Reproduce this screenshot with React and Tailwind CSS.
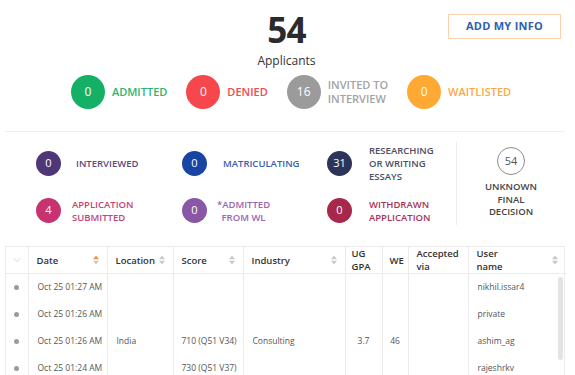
import { ChevronDown } from 'lucide-react'

// top status pills
const mainStats = [
  { n: 0, label: ['ADMITTED'], circle: 'bg-[#13b066]', text: 'text-[#2db46e]' },
  { n: 0, label: ['DENIED'], circle: 'bg-[#f5474c]', text: 'text-[#f04a50]' },
  { n: 16, label: ['INVITED TO', 'INTERVIEW'], circle: 'bg-[#9b9b9b]', text: 'text-[#a3a3a3]' },
  { n: 0, label: ['WAITLISTED'], circle: 'bg-[#ffa935]', text: 'text-[#fca846]' },
]

// secondary stats, row by row
const subStats = [
  { n: 0, label: ['INTERVIEWED'], circle: 'bg-[#4f3677]', text: 'text-[#5b4a80]', pad: 'ml-[15px]' },
  { n: 0, label: ['MATRICULATING'], circle: 'bg-[#1845a3]', text: 'text-[#3b5eb3]', pad: 'ml-[16px]' },
  { n: 31, label: ['RESEARCHING', 'OR WRITING', 'ESSAYS'], circle: 'bg-[#2c3558]', text: 'text-[#4b4f62]', pad: 'ml-[17px]' },
  { n: 4, label: ['APPLICATION', 'SUBMITTED'], circle: 'bg-[#c8336f]', text: 'text-[#c4437b]', pad: 'ml-[11px]' },
  { n: 0, label: ['*ADMITTED', 'FROM WL'], circle: 'bg-[#8a57a6]', text: 'text-[#9a66b3] text-center', pad: 'ml-[10px]' },
  { n: 0, label: ['WITHDRAWN', 'APPLICATION'], circle: 'bg-[#a8284b]', text: 'text-[#a73458]', pad: 'ml-[17px]' },
]

const columns = [
  { key: 'dot', label: [], w: 'w-[22px]' },
  { key: 'date', label: ['Date'], w: 'w-[79px]', sort: 'active' },
  { key: 'loc', label: ['Location'], w: 'w-[66px]', sort: 'idle' },
  { key: 'score', label: ['Score'], w: 'w-[70px]', sort: 'idle' },
  { key: 'ind', label: ['Industry'], w: 'w-[102px]', sort: 'idle' },
  { key: 'gpa', label: ['UG', 'GPA'], w: 'w-[37px]', pad: 'pl-[6px]' },
  { key: 'we', label: ['WE'], w: 'w-[26px]', pad: 'pl-[7px]' },
  { key: 'via', label: ['Accepted', 'via'], w: 'w-[60px]' },
  { key: 'user', label: ['User', 'name'], w: 'w-[98px]', sort: 'idle' },
]

const rows = [
  { date: 'Oct 25 01:27 AM', user: 'nikhil.issar4' },
  { date: 'Oct 25 01:26 AM', user: 'private' },
  { date: 'Oct 25 01:26 AM', loc: 'India', score: '710 (Q51 V34)', ind: 'Consulting', gpa: '3.7', we: '46', user: 'ashim_ag' },
  { date: 'Oct 25 01:24 AM', score: '730 (Q51 V37)', user: 'rajeshrkv' },
]

function SortIcon({ active }) {
  return (
    <svg width="6" height="10" viewBox="0 0 6 10" className="shrink-0">
      <path d="M0 4.2 L3 0.5 L6 4.2 Z" fill={active ? '#f5913c' : '#c9c9c9'} />
      <path d="M0 5.8 L3 9.5 L6 5.8 Z" fill="#c9c9c9" />
    </svg>
  )
}

export default function App() {
  return (
    <div className="h-[375px] w-[575px] overflow-hidden bg-white text-[#333]" style={{ fontFamily: '"Open Sans", "Liberation Sans", sans-serif' }}>
      <div className="ml-[5px] w-[560px]">

        {/* Header: total + add button */}
        <div className="grid grid-cols-[1fr_auto_1fr] pt-[10px]">
          <div />
          <div className="flex flex-col items-center pl-[3px]">
            <div className="text-[35px] font-bold leading-[40px] tracking-tight text-[#2b2b2b]">54</div>
            <div className="mt-[3px] text-[12px] leading-[16px] text-[#333]">Applicants</div>
          </div>
          <div className="flex justify-end">
            <button className="mt-[4px] mr-[4px] h-[25px] w-[113px] border border-[#fbd2ac] text-[11px] font-bold tracking-wide text-[#2f5ead]">
              ADD MY INFO
            </button>
          </div>
        </div>

        {/* Main statuses */}
        <div className="mt-[6px] flex items-center justify-center gap-[19px] pl-[12px]">
          {mainStats.map((s, i) => (
            <div key={i} className="flex items-center gap-[7px]">
              <div className={`flex h-[34px] w-[34px] items-center justify-center rounded-full text-[12px] text-white ${s.circle}`}>{s.n}</div>
              <div className={`text-[11px] font-semibold leading-[14px] ${s.text}`}>
                {s.label.map((l) => <div key={l}>{l}</div>)}
              </div>
            </div>
          ))}
        </div>

        <div className="mt-[22px] border-t border-[#eef0ea]" />

        {/* Secondary statuses */}
        <div className="mt-[10px] flex h-[83px]">
          <div className="grid w-[451px] grid-cols-[146px_145px_1fr] grid-rows-[40px_26px] content-center gap-y-[14px] pl-[31px]">
            {subStats.map((s, i) => (
              <div key={i} className="flex items-center">
                <div className={`flex h-[25px] w-[25px] shrink-0 items-center justify-center rounded-full text-[11px] text-white ${s.circle}`}>{s.n}</div>
                <div className={`text-[9.5px] font-semibold leading-[13px] ${s.pad} ${s.text}`}>
                  {s.label.map((l) => <div key={l}>{l}</div>)}
                </div>
              </div>
            ))}
          </div>
          <div className="w-px self-stretch bg-[#ececec]" />
          <div className="flex flex-1 flex-col items-center pt-[5px]">
            <div className="flex h-[28px] w-[28px] items-center justify-center rounded-full border border-[#8c8c8c] text-[11px] text-[#555]">54</div>
            <div className="mt-[6px] text-center text-[9.5px] font-semibold leading-[12.5px] text-[#454545]">
              <div>UNKNOWN</div>
              <div>FINAL</div>
              <div>DECISION</div>
            </div>
          </div>
        </div>

        {/* Applicants table */}
        <div className="relative mt-[21px] border border-[#ebebeb]">
          <table className="w-full table-fixed border-collapse">
            <thead>
              <tr className="h-[26px] border-b border-[#ebebeb]">
                {columns.map((c, i) => (
                  <th key={c.key} className={`${c.w} ${i > 0 ? 'border-l border-[#ebebeb]' : ''} p-0 text-left align-middle font-semibold`}>
                    {c.key === 'dot' ? (
                      <div className="flex justify-center">
                        <ChevronDown size={12} strokeWidth={1.2} color="#b8b8b8" />
                      </div>
                    ) : (
                      <div className={`flex items-center justify-between ${c.pad || 'pl-[8px]'} pr-[8px]`}>
                        <div className="text-[9.5px] leading-[13px] text-[#333]">
                          {c.label.map((l) => <div key={l}>{l}</div>)}
                        </div>
                        {c.sort && <SortIcon active={c.sort === 'active'} />}
                      </div>
                    )}
                  </th>
                ))}
              </tr>
            </thead>
            <tbody>
              {rows.map((r, i) => (
                <tr key={i} className="h-[27px] text-[8.5px] text-[#555]">
                  <td className="p-0">
                    <div className="mx-auto h-[5px] w-[5px] rounded-full bg-[#9b9b9b]" />
                  </td>
                  <td className="border-l border-[#ebebeb] pl-[9px]">{r.date}</td>
                  <td className="border-l border-[#ebebeb] pl-[9px]">{r.loc}</td>
                  <td className="border-l border-[#ebebeb] pl-[8px]">{r.score}</td>
                  <td className="border-l border-[#ebebeb] pl-[9px]">{r.ind}</td>
                  <td className="border-l border-[#ebebeb] text-center">{r.gpa}</td>
                  <td className="border-l border-[#ebebeb] text-center">{r.we}</td>
                  <td className="border-l border-[#ebebeb]"></td>
                  <td className="border-l border-[#ebebeb] pl-[9px]">{r.user}</td>
                </tr>
              ))}
            </tbody>
          </table>
          {/* scrollbar thumb */}
          <div className="absolute right-[1px] top-[30px] h-[83px] w-[5px] rounded-full bg-[#e3e3e3]" />
        </div>
      </div>
    </div>
  )
}
